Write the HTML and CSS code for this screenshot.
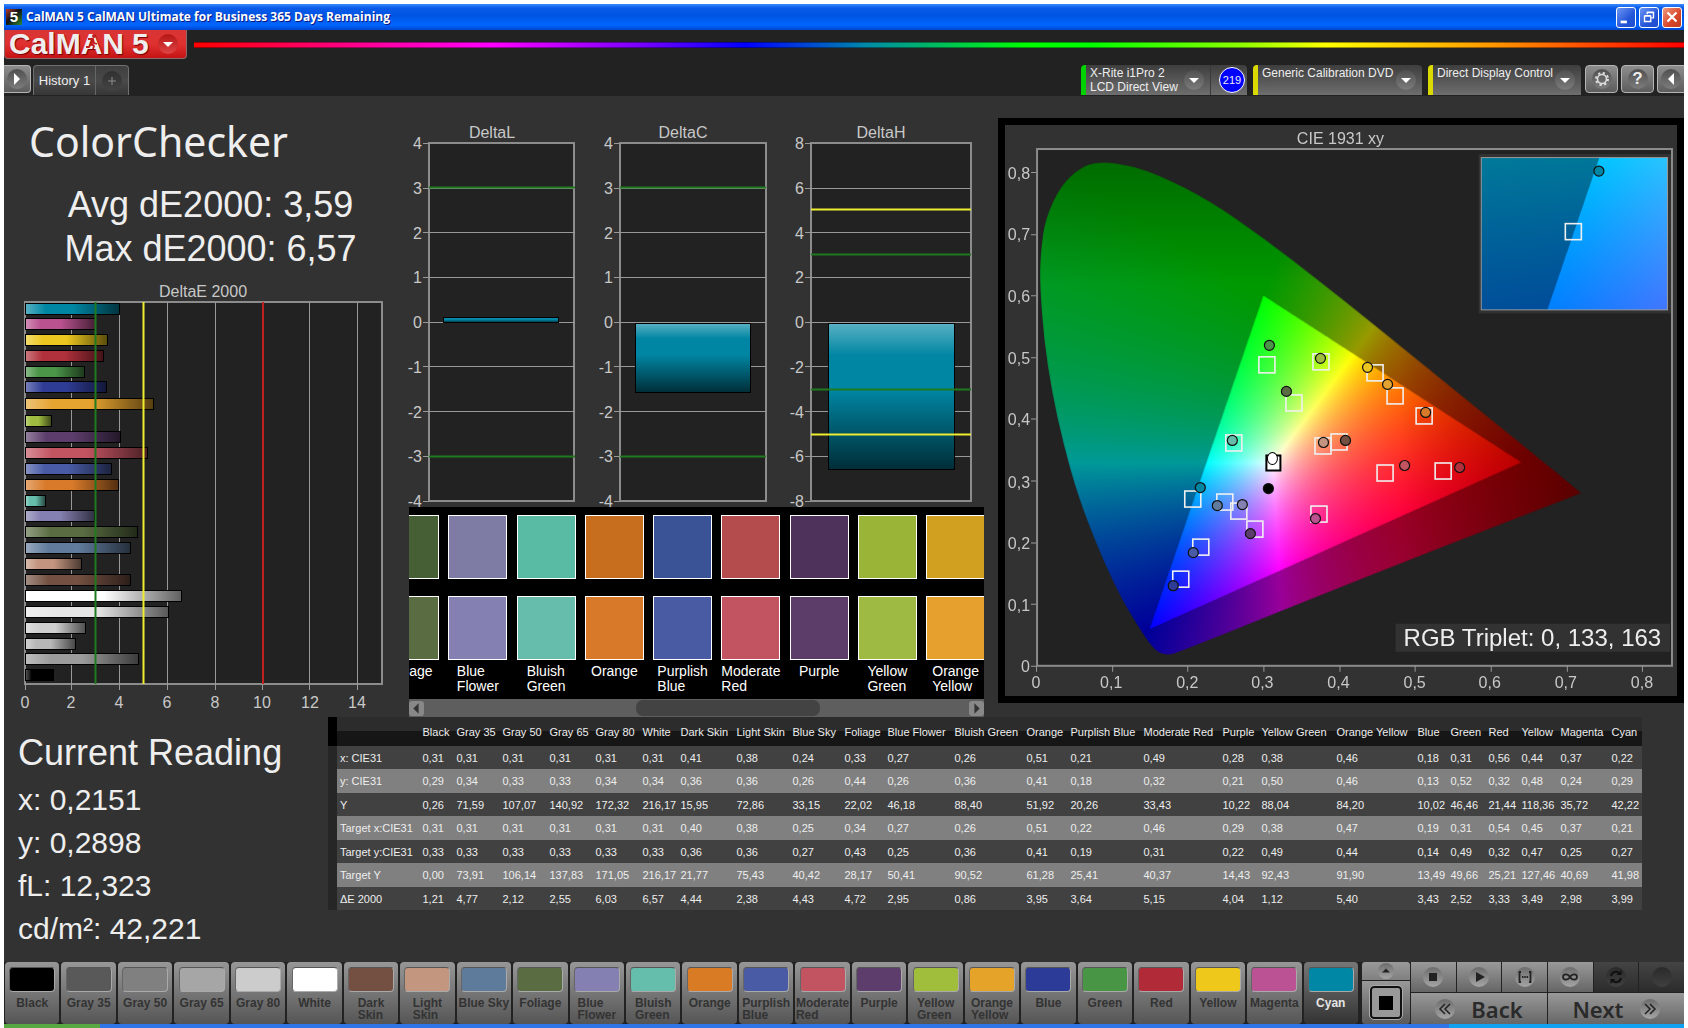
FILE: index.html
```html
<!DOCTYPE html>
<html lang="en">
<head>
<meta charset="utf-8">
<title>CalMAN 5</title>
<link rel="stylesheet" href="styles.css">
</head>
<body>
<header class="titlebar">
  <span class="app-icon">5</span>
  <span class="title-text">CalMAN 5 CalMAN Ultimate for Business 365 Days Remaining</span>
  <button class="win-btn" aria-label="Minimize"><svg viewBox="0 0 20 20"><path d="M4 14h7v3H4z" fill="#fff"/></svg></button>
  <button class="win-btn" aria-label="Restore"><svg viewBox="0 0 20 20"><path d="M8 7V5h7v6h-2M8 4.500h7M5 9h7v6H5zM5 8.500h7" fill="none" stroke="#fff" stroke-width="1.500"/></svg></button>
  <button class="win-btn close" aria-label="Close"><svg viewBox="0 0 20 20"><path d="M5 5l10 10M15 5L5 15" stroke="#fff" stroke-width="2.500"/></svg></button>
</header>

<div class="app">
  <div class="brand-row">
    <button class="logo"><span class="logo-name">CalMAN</span><span>5</span><span class="dot red"><svg viewBox="0 0 20 20"><path d="M5 8h10l-5 5z" fill="#fff"/></svg></span>
      <svg class="runner" viewBox="0 0 14 16"><circle cx="9" cy="2" r="2" fill="#c31c1c"/><path d="M3 5l5 0 1 4 3 1M8 5l-2 5 3 2-1 3M6 10l-2 3-3 0" fill="none" stroke="#c31c1c" stroke-width="1.800"/></svg>
    </button>
    <div class="spectrum"></div>
  </div>
  <nav class="tab-row">
    <button class="square first" aria-label="Expand"><span class="dot"><svg viewBox="0 0 20 20"><path d="M7 4l6 6-6 6z" fill="#fff"/></svg></span></button>
    <div class="tabs"><button class="tab">History 1</button><button class="tab add" aria-label="Add history"><span class="dot dim"><svg viewBox="0 0 20 20"><path d="M10 6v8M6 10h8" stroke="#8c8c8c"/></svg></span></button></div>
    <div class="devices">
      <div class="device meter"><button class="device-main">X-Rite i1Pro 2<br>LCD Direct View<span class="dot"><svg viewBox="0 0 20 20"><path d="M5 8h10l-5 5z" fill="#fff"/></svg></span></button><span class="badge">219</span></div>
      <div class="device source"><button class="device-main">Generic Calibration DVD<span class="dot"><svg viewBox="0 0 20 20"><path d="M5 8h10l-5 5z" fill="#fff"/></svg></span></button></div>
      <div class="device display"><button class="device-main">Direct Display Control<span class="dot"><svg viewBox="0 0 20 20"><path d="M5 8h10l-5 5z" fill="#fff"/></svg></span></button></div>
      <button class="square" aria-label="Settings"><span class="dot"><svg viewBox="0 0 20 20"><circle cx="10" cy="10" r="4.500" fill="none" stroke="#ddd" stroke-width="1.600"/><circle cx="10" cy="10" r="6" fill="none" stroke="#ddd" stroke-width="2" stroke-dasharray="2.300 2.412"/></svg></span></button>
      <button class="square" aria-label="Help"><span class="dot glyph">?</span></button>
      <button class="square last" aria-label="Collapse"><span class="dot"><svg viewBox="0 0 20 20"><path d="M13 4l-6 6 6 6z" fill="#fff"/></svg></span></button>
    </div>
  </nav>

  <main class="workspace">
    <section class="overview">
      <h1>ColorChecker</h1>
      <p class="stats">Avg dE2000: 3,59<br>Max dE2000: 6,57</p>
      <svg class="chart" viewBox="0 0 401 436">
        <defs>
          <linearGradient id="shadeX"><stop offset="0" stop-color="#fff" stop-opacity=".35"/><stop offset=".22" stop-color="#fff" stop-opacity="0"/><stop offset=".5" stop-color="#000" stop-opacity="0"/><stop offset="1" stop-color="#000" stop-opacity=".62"/></linearGradient>
          <linearGradient id="shadeY" x2="0" y2="1"><stop offset="0" stop-color="#fff" stop-opacity=".35"/><stop offset=".22" stop-color="#fff" stop-opacity="0"/><stop offset=".45" stop-color="#000" stop-opacity="0"/><stop offset="1" stop-color="#000" stop-opacity=".66"/></linearGradient>
        </defs>
        <text class="mid" x="199" y="17">DeltaE 2000</text>
        <rect class="plot" x="21" y="22" width="357" height="382"/>
        <path class="grid" d="M67.500 22V410M115.500 22V410M163.500 22V410M211.500 22V410M258.500 22V410M305.500 22V410M353.500 22V410M21.500 404V410"/>
        <g id="deltaBars"></g>
        <path class="ok strong" d="M91.500 22V404"/><path class="warn" d="M139.500 22V404"/><path class="bad" d="M259 22V404"/>
        <g class="mid"><text x="21" y="428">0</text><text x="67" y="428">2</text><text x="115" y="428">4</text><text x="163" y="428">6</text><text x="211" y="428">8</text><text x="258" y="428">10</text><text x="306" y="428">12</text><text x="353" y="428">14</text></g>
      </svg>
    </section>

    <section class="details">
      <div class="deltas">
        <svg class="chart" viewBox="0 0 192 397">
          <text class="mid" x="87" y="28">DeltaL</text>
          <rect class="plot" x="24" y="33" width="145" height="358"/>
          <path class="grid" d="M18 33.500h6M18 78.500h152M18 122.500h152M18 167.500h152M18 212.500h152M18 256.500h152M18 301.500h152M18 346.500h152M18 391.500h6"/>
          <path class="ok strong" d="M24 77.500h146M24 346.500h146"/>
          <g class="bar"><rect class="cyan" x="38.500" y="207.500" width="115" height="5"/><rect fill="url(#shadeY)" x="38.500" y="207.500" width="115" height="5"/></g>
          <g class="end"><text x="17" y="39">4</text><text x="17" y="84">3</text><text x="17" y="129">2</text><text x="17" y="173">1</text><text x="17" y="218">0</text><text x="17" y="263">-1</text><text x="17" y="308">-2</text><text x="17" y="352">-3</text><text x="17" y="397">-4</text></g>
        </svg>
        <svg class="chart" viewBox="0 0 191 397">
          <text class="mid" x="86" y="28">DeltaC</text>
          <rect class="plot" x="23" y="33" width="146" height="358"/>
          <path class="grid" d="M17 33.500h6M17 78.500h152M17 122.500h152M17 167.500h152M17 212.500h152M17 256.500h152M17 301.500h152M17 346.500h152M17 391.500h6"/>
          <path class="ok strong" d="M23 77.500h146M23 346.500h146"/>
          <g class="bar"><rect class="cyan" x="38.500" y="213.500" width="115" height="69"/><rect fill="url(#shadeY)" x="38.500" y="213.500" width="115" height="69"/></g>
          <g class="end"><text x="16" y="39">4</text><text x="16" y="84">3</text><text x="16" y="129">2</text><text x="16" y="173">1</text><text x="16" y="218">0</text><text x="16" y="263">-1</text><text x="16" y="308">-2</text><text x="16" y="352">-3</text><text x="16" y="397">-4</text></g>
        </svg>
        <svg class="chart" viewBox="0 0 202 397">
          <text class="mid" x="93" y="28">DeltaH</text>
          <rect class="plot" x="23" y="33" width="160" height="358"/>
          <path class="grid" d="M17 33.500h6M17 78.500h166M17 122.500h166M17 167.500h166M17 212.500h166M17 256.500h166M17 301.500h166M17 346.500h166M17 391.500h6"/>
          <g class="bar"><rect class="cyan" x="40.500" y="213.500" width="126" height="146"/><rect fill="url(#shadeY)" x="40.500" y="213.500" width="126" height="146"/></g>
          <path class="ok strong" d="M23 144.500h160M23 279.500h160"/><path class="warn" d="M23 99.500h160M23 324.500h160"/>
          <g class="end"><text x="16" y="39">8</text><text x="16" y="84">6</text><text x="16" y="129">4</text><text x="16" y="173">2</text><text x="16" y="218">0</text><text x="16" y="263">-2</text><text x="16" y="308">-4</text><text x="16" y="352">-6</text><text x="16" y="397">-8</text></g>
        </svg>
      </div>
      <div class="swatches">
        <div class="swatch-track">
          <div class="pair"><i style="background:#475f35"></i><i style="background:#5a6d42"></i><span>Foliage</span></div>
          <div class="pair"><i style="background:#7e7ca4"></i><i style="background:#8480b1"></i><span>Blue<br>Flower</span></div>
          <div class="pair"><i style="background:#5abba5"></i><i style="background:#66bdac"></i><span>Bluish<br>Green</span></div>
          <div class="pair"><i style="background:#c76e1e"></i><i style="background:#d87829"></i><span>Orange</span></div>
          <div class="pair"><i style="background:#3a5296"></i><i style="background:#495ba3"></i><span>Purplish<br>Blue</span></div>
          <div class="pair"><i style="background:#b44b4d"></i><i style="background:#c25360"></i><span>Moderate<br>Red</span></div>
          <div class="pair"><i style="background:#4e325c"></i><i style="background:#5c3d6a"></i><span>Purple</span></div>
          <div class="pair"><i style="background:#9ab438"></i><i style="background:#9fba42"></i><span>Yellow<br>Green</span></div>
          <div class="pair"><i style="background:#d1a021"></i><i style="background:#e5a02e"></i><span>Orange<br>Yellow</span></div>
        </div>
      </div>
      <div class="scrollbar"><button aria-label="Scroll left"><svg viewBox="0 0 14 14"><path d="M9 2v10L4 7z"/></svg></button><span class="thumb"></span><button aria-label="Scroll right"><svg viewBox="0 0 14 14"><path d="M5 2v10l5-5z"/></svg></button></div>
    </section>

    <section class="gamut">
      <canvas id="gamutCanvas" width="671" height="570"></canvas>
      <svg class="chart" viewBox="0 0 671 570">
        <text class="mid" x="335" y="19">CIE 1931 xy</text>
        <rect class="frame" x="32" y="24" width="634" height="516"/>
        <path class="grid" d="M26 540.500h6M26 478.500h5M26 417.500h5M26 355.500h5M26 293.500h5M26 232.500h5M26 170.500h5M26 109.500h5M26 47.500h5M31.500 540v6M107.500 540v6M182.500 540v6M258.500 540v6M334.500 540v6M409.500 540v6M485.500 540v6M561.500 540v6M636.500 540v6"/>
        <g class="end"><text x="25" y="546">0</text><text x="25" y="485">0,1</text><text x="25" y="423">0,2</text><text x="25" y="362">0,3</text><text x="25" y="300">0,4</text><text x="25" y="239">0,5</text><text x="25" y="177">0,6</text><text x="25" y="115">0,7</text><text x="25" y="54">0,8</text></g>
        <g class="mid"><text x="31" y="562">0</text><text x="106" y="562">0,1</text><text x="182" y="562">0,2</text><text x="257" y="562">0,3</text><text x="333" y="562">0,4</text><text x="409" y="562">0,5</text><text x="484" y="562">0,6</text><text x="560" y="562">0,7</text><text x="636" y="562">0,8</text></g>
        <g id="markers"></g>
        <rect x="390" y="498" width="274" height="28" fill="#323232"/>
        <text class="triplet" x="398" y="520">RGB Triplet: 0, 133, 163</text>
      </svg>
    </section>
  </main>

  <section class="results">
    <div class="reading">
      <h2>Current Reading</h2>
      <p>x: 0,2151<br>y: 0,2898<br>fL: 12,323<br>cd/m²: 42,221</p>
    </div>
    <table class="data">
      <colgroup><col style="width:87px"><col style="width:34px"><col style="width:46px"><col style="width:47px"><col style="width:46px"><col style="width:47px"><col style="width:38px"><col style="width:56px"><col style="width:56px"><col style="width:52px"><col style="width:43px"><col style="width:67px"><col style="width:72px"><col style="width:44px"><col style="width:73px"><col style="width:79px"><col style="width:39px"><col style="width:75px"><col style="width:81px"><col style="width:33px"><col style="width:38px"><col style="width:33px"><col style="width:39px"><col style="width:51px"><col style="width:33px"></colgroup>
      <thead><tr><td></td><th>Black</th><th>Gray 35</th><th>Gray 50</th><th>Gray 65</th><th>Gray 80</th><th>White</th><th>Dark Skin</th><th>Light Skin</th><th>Blue Sky</th><th>Foliage</th><th>Blue Flower</th><th>Bluish Green</th><th>Orange</th><th>Purplish Blue</th><th>Moderate Red</th><th>Purple</th><th>Yellow Green</th><th>Orange Yellow</th><th>Blue</th><th>Green</th><th>Red</th><th>Yellow</th><th>Magenta</th><th>Cyan</th></tr></thead>
      <tbody>
        <tr><th>x: CIE31</th><td>0,31</td><td>0,31</td><td>0,31</td><td>0,31</td><td>0,31</td><td>0,31</td><td>0,41</td><td>0,38</td><td>0,24</td><td>0,33</td><td>0,27</td><td>0,26</td><td>0,51</td><td>0,21</td><td>0,49</td><td>0,28</td><td>0,38</td><td>0,46</td><td>0,18</td><td>0,31</td><td>0,56</td><td>0,44</td><td>0,37</td><td>0,22</td></tr>
        <tr><th>y: CIE31</th><td>0,29</td><td>0,34</td><td>0,33</td><td>0,33</td><td>0,34</td><td>0,34</td><td>0,36</td><td>0,36</td><td>0,26</td><td>0,44</td><td>0,26</td><td>0,36</td><td>0,41</td><td>0,18</td><td>0,32</td><td>0,21</td><td>0,50</td><td>0,46</td><td>0,13</td><td>0,52</td><td>0,32</td><td>0,48</td><td>0,24</td><td>0,29</td></tr>
        <tr><th>Y</th><td>0,26</td><td>71,59</td><td>107,07</td><td>140,92</td><td>172,32</td><td>216,17</td><td>15,95</td><td>72,86</td><td>33,15</td><td>22,02</td><td>46,18</td><td>88,40</td><td>51,92</td><td>20,26</td><td>33,43</td><td>10,22</td><td>88,04</td><td>84,20</td><td>10,02</td><td>46,46</td><td>21,44</td><td>118,36</td><td>35,72</td><td>42,22</td></tr>
        <tr><th>Target x:CIE31</th><td>0,31</td><td>0,31</td><td>0,31</td><td>0,31</td><td>0,31</td><td>0,31</td><td>0,40</td><td>0,38</td><td>0,25</td><td>0,34</td><td>0,27</td><td>0,26</td><td>0,51</td><td>0,22</td><td>0,46</td><td>0,29</td><td>0,38</td><td>0,47</td><td>0,19</td><td>0,31</td><td>0,54</td><td>0,45</td><td>0,37</td><td>0,21</td></tr>
        <tr><th>Target y:CIE31</th><td>0,33</td><td>0,33</td><td>0,33</td><td>0,33</td><td>0,33</td><td>0,33</td><td>0,36</td><td>0,36</td><td>0,27</td><td>0,43</td><td>0,25</td><td>0,36</td><td>0,41</td><td>0,19</td><td>0,31</td><td>0,22</td><td>0,49</td><td>0,44</td><td>0,14</td><td>0,49</td><td>0,32</td><td>0,47</td><td>0,25</td><td>0,27</td></tr>
        <tr><th>Target Y</th><td>0,00</td><td>73,91</td><td>106,14</td><td>137,83</td><td>171,05</td><td>216,17</td><td>21,77</td><td>75,43</td><td>40,42</td><td>28,17</td><td>50,41</td><td>90,52</td><td>61,28</td><td>25,41</td><td>40,37</td><td>14,43</td><td>92,43</td><td>91,90</td><td>13,49</td><td>49,66</td><td>25,21</td><td>127,46</td><td>40,69</td><td>41,98</td></tr>
        <tr><th>ΔE 2000</th><td>1,21</td><td>4,77</td><td>2,12</td><td>2,55</td><td>6,03</td><td>6,57</td><td>4,44</td><td>2,38</td><td>4,43</td><td>4,72</td><td>2,95</td><td>0,86</td><td>3,95</td><td>3,64</td><td>5,15</td><td>4,04</td><td>1,12</td><td>5,40</td><td>3,43</td><td>2,52</td><td>3,33</td><td>3,49</td><td>2,98</td><td>3,99</td></tr>
      </tbody>
    </table>
  </section>

  <footer class="toolbar">
    <div class="patches">
      <button><i style="background:#000"></i><span>Black</span></button>
      <button><i style="background:#595959"></i><span>Gray 35</span></button>
      <button><i style="background:#808080"></i><span>Gray 50</span></button>
      <button><i style="background:#a6a6a6"></i><span>Gray 65</span></button>
      <button><i style="background:#ccc"></i><span>Gray 80</span></button>
      <button><i style="background:#fff"></i><span>White</span></button>
      <button><i style="background:#735042"></i><span>Dark<br>Skin</span></button>
      <button><i style="background:#c39680"></i><span>Light<br>Skin</span></button>
      <button><i style="background:#5e7b9c"></i><span>Blue Sky</span></button>
      <button><i style="background:#596c42"></i><span>Foliage</span></button>
      <button><i style="background:#8480b1"></i><span>Blue<br>Flower</span></button>
      <button><i style="background:#65bdac"></i><span>Bluish<br>Green</span></button>
      <button><i style="background:#d97a25"></i><span>Orange</span></button>
      <button><i style="background:#4a5ba6"></i><span>Purplish<br>Blue</span></button>
      <button><i style="background:#c25462"></i><span>Moderate<br>Red</span></button>
      <button><i style="background:#5c3d6c"></i><span>Purple</span></button>
      <button><i style="background:#a0bd3c"></i><span>Yellow<br>Green</span></button>
      <button><i style="background:#e6a329"></i><span>Orange<br>Yellow</span></button>
      <button><i style="background:#2c3a98"></i><span>Blue</span></button>
      <button><i style="background:#479545"></i><span>Green</span></button>
      <button><i style="background:#b02a37"></i><span>Red</span></button>
      <button><i style="background:#eec91b"></i><span>Yellow</span></button>
      <button><i style="background:#bb5294"></i><span>Magenta</span></button>
      <button class="active"><i style="background:#0087a6"></i><span>Cyan</span></button>
    </div>
    <div class="pattern">
      <button aria-label="Show patterns"><span class="dot"><svg viewBox="0 0 20 20"><path d="M5 12l5-5 5 5z" fill="#222"/></svg></span></button>
      <button class="window-pattern" aria-label="Window pattern"><span></span></button>
    </div>
    <div class="controls">
      <button aria-label="Stop"><span class="dot"><svg viewBox="0 0 20 20"><path d="M6 6h8v8H6z" fill="#222"/></svg></span></button>
      <button aria-label="Play"><span class="dot"><svg viewBox="0 0 20 20"><path d="M7 5l9 5-9 5z" fill="#222"/></svg></span></button>
      <button aria-label="Series"><span class="dot"><svg viewBox="0 0 20 20"><path d="M6 5H4.500v10H6M14 5h1.500v10H14M7 10h1.500M9.300 10h1.500M11.600 10h1.500" fill="none" stroke="#222" stroke-width="1.800"/></svg></span></button>
      <button aria-label="Continuous"><span class="dot"><svg viewBox="0 0 20 20"><path d="M10 10c-2-3.500-7-3.500-7 0s5 3.500 7 0 7-3.500 7 0-5 3.500-7 0z" fill="none" stroke="#222" stroke-width="1.700"/></svg></span></button>
      <button class="off" aria-label="Refresh"><span class="dot"><svg viewBox="0 0 20 20"><path d="M5 9a5 5 0 0 1 9-2M15 11a5 5 0 0 1-9 2" fill="none" stroke="#111" stroke-width="2"/><path d="M15.500 3v5h-5zM4.500 17v-5h5z" fill="#111"/></svg></span></button>
      <button class="off" aria-label="Record"><span class="dot"></span></button>
      <button class="nav"><span class="dot"><svg viewBox="0 0 20 20"><path d="M10 5l-5 5 5 5M15 5l-5 5 5 5" fill="none" stroke="#222" stroke-width="1.500"/></svg></span>Back</button>
      <button class="nav">Next<span class="dot"><svg viewBox="0 0 20 20"><path d="M5 5l5 5-5 5M10 5l5 5-5 5" fill="none" stroke="#222" stroke-width="1.500"/></svg></span></button>
    </div>
  </footer>
</div>
<div class="taskbar"></div>
<script src="app.js"></script>
</body>
</html>
```
FILE: styles.css
```css
* { box-sizing: border-box; }
body { margin: 0; padding: 4px 4px 0; min-height: 100vh; display: flex; flex-direction: column; background: #fff; font-family: "Liberation Sans", Arial, sans-serif; color: #eee; }
button { margin: 0; padding: 0; border: 0; font: inherit; color: inherit; background: none; cursor: pointer; }
svg { display: block; }
h1, h2, p { margin: 0; font-weight: 400; }

.titlebar { height: 26px; display: flex; align-items: center; gap: 3px; padding: 0 2px; background: linear-gradient(#3a8bff, #0a5be8 15%, #0054e3 45%, #0066ff 80%, #0045d0); }
.app-icon { width: 16px; height: 16px; margin-right: 1px; background: linear-gradient(135deg, #b43b2c, #111 45%, #2c8a35); font: bold 15px/16px "Liberation Sans", sans-serif; text-align: center; color: #fff; }
.title-text { flex: 1; font: bold 12px/20px "Open Sans", "Noto Sans", sans-serif; color: #fff; text-shadow: 1px 1px #0a1883; }
.win-btn { width: 20px; height: 21px; border: 1px solid #fff; border-radius: 3px; background: linear-gradient(135deg, #6d97f5, #2455d8 60%, #1e4ccc); }
.win-btn.close { background: linear-gradient(135deg, #f0997d, #d8452a 60%, #c03d20); }

.app { flex: 1; display: flex; flex-direction: column; background: #222; }
.brand-row { height: 35px; display: flex; gap: 7px; }
.logo { position: relative; width: 183px; height: 29px; flex: none; display: flex; align-items: center; gap: 8px; padding: 0 4px; border: 1px solid #8a6a6a; border-top: 0; border-radius: 0 0 4px 4px; background: linear-gradient(#d83535, #e03030 50%, #c41414); font: bold 30px/26px "Liberation Sans", sans-serif; color: #eee; text-shadow: 1px 1px 1px #700; overflow: hidden; }
.runner { position: absolute; left: 80px; top: 4px; width: 14px; height: 16px; }
.dot { width: 20px; height: 20px; border-radius: 50%; background: linear-gradient(#5a5a5a, #8e8e8e); display: inline-block; flex: none; }
.dot.red { background: linear-gradient(#b51616, #e04444); margin-left: 1px; text-shadow: none; }
.dot.dim { background: linear-gradient(#303030, #444); }
.spectrum { flex: 1; height: 6px; margin-top: 12px; background: linear-gradient(90deg, #f00, #f0a 13%, #f0f 20%, #70f 30%, #00f 37%, #08a 45%, #0f0 56%, #0f0 60%, #8f0 70%, #ff0 76%, #f90 87%, #f00); border-top: 1px solid #0006; border-bottom: 1px solid #0006; }
.tab-row { height: 31px; display: flex; gap: 2px; }
.square { width: 33px; height: 28px; border: 1px solid #b5b5b5; border-radius: 4px; background: linear-gradient(#8d8d8d, #5d5d5d); display: grid; place-items: center; }
.square.first { width: 27px; border-left: 0; border-radius: 0 4px 4px 0; }
.square.last { width: 27px; border-right: 0; border-radius: 4px 0 0 4px; }
.glyph { font: bold 17px/20px "Liberation Sans", sans-serif; text-align: center; }
.tabs { display: flex; height: 30px; border: 1px solid #707070; border-bottom: 0; border-radius: 4px 4px 0 0; background: linear-gradient(#3f3f3f, #4a4a4a 50%, #373737); font-size: 13px; }
.tab { width: 61px; }
.add { width: 33px; border-left: 1px solid #666; display: grid; place-items: center; }
.devices { margin-left: auto; display: flex; gap: 3px; }
.device { height: 30px; margin-right: 3px; display: flex; border-left: 5px solid #dada00; border-radius: 4px 4px 0 0; background: linear-gradient(#3e3e3e, #6e6e6e); font-size: 12px; line-height: 14px; }
.meter { border-left-color: #00d400; width: 166px; }
.source { width: 169px; }
.display { width: 153px; margin-right: 1px; }
.device-main { flex: 1; position: relative; text-align: left; padding: 1px 0 0 4px; white-space: nowrap; display: flex; flex-direction: column; justify-content: flex-start; }
.device-main .dot { position: absolute; right: 6px; top: 5px; }
.device-main .dot, .square .dot { background: linear-gradient(#505050, #7c7c7c); }
.badge { width: 26px; height: 26px; margin: 2px 2px 0 8px; border-radius: 50%; border: 1px solid #fff; background: #00f; font-size: 11px; line-height: 24px; text-align: center; }
.meter .device-main { border-right: 1px solid #3a3a3a; }

.workspace { display: grid; grid-template-columns: minmax(0, 401fr) minmax(0, 593fr) minmax(0, 686fr); background: #323232; }
.overview { padding-top: 15px; }
.overview h1 { font: 41px/60px "Noto Sans", sans-serif; padding-left: 25px; }
.stats { margin: 12px 0 9px; font-size: 36px; line-height: 44px; text-align: center; padding-left: 12px; }
.chart { width: 100%; height: auto; font-size: 16px; fill: #c8c8c8; }
.mid { text-anchor: middle; }
.end { text-anchor: end; }
.plot { fill: #222; stroke: #8c8c8c; stroke-width: 2; }
.frame { fill: none; stroke: #8c8c8c; stroke-width: 2; }
.grid { stroke: #999; stroke-width: 1; fill: none; }
.ok { stroke: #1a7a1a; }
.warn { stroke: #eeee30; stroke-width: 2; }
.bad { stroke: #c02020; stroke-width: 2; }
.strong { stroke-width: 2; stroke: #1f7a1f; }
.bar { stroke: #000; }
.cyan { fill: #0086a3; }
.details { padding-top: 14px; }
.deltas { display: grid; grid-template-columns: 192fr 191fr 202fr; padding-right: 8px; }
.swatches { margin: 0 14px 0 4px; height: 192px; background: #000; overflow: hidden; }
.swatch-track { display: grid; grid-template-columns: repeat(9, 1fr); width: 107%; margin-left: -6%; padding: 8px 0 0 1px; }
.pair { display: flex; flex-direction: column; align-items: center; gap: 17px; font-size: 14px; line-height: 15px; color: #fff; }
.pair i { width: 59px; height: 64px; border: 1px solid #fff; }
.pair span { margin-top: -13px; }
.scrollbar { margin: 0 14px 0 4px; height: 18px; display: flex; align-items: center; background: #5e5e5e; }
.scrollbar button { width: 15px; height: 15px; border-radius: 3px; background: #888; fill: #333; }
.thumb { width: 32%; height: 16px; margin: 0 26% 0 auto; border-radius: 7px; background: #434343; }
.gamut { margin: 22px 0 0; border: 7px solid #000; display: grid; height: max-content; }
.gamut > * { grid-area: 1 / 1; width: 100%; height: auto; }
.triplet { font-size: 24px; fill: #eee; }

.results { flex: 1; background: #323232; display: flex; align-items: flex-start; }
.reading { width: 324px; flex: none; padding: 14px 0 0 14px; }
.reading h2 { font-size: 36px; line-height: 44px; }
.reading p { font-size: 30px; line-height: 43px; padding-top: 3px; }
.data { flex: 1 1 0; width: 0; margin-right: 47px; table-layout: fixed; border-collapse: collapse; font-size: 11px; line-height: 16px; white-space: nowrap; }
.data th, .data td { padding: 0 0 0 3px; text-align: left; font-weight: 400; }
.data thead { height: 29px; background: linear-gradient(#2c2c2c 50%, #161616 50%); }
.data tbody tr { height: 23px; background: #414141; }
.data tbody tr:nth-child(even) { background: #808080; height: 24px; }
.data tbody th { border-left: 9px solid #262626; }
.data thead td { border-left: 9px solid #000; }

.toolbar { height: 62px; display: flex; gap: 1px; background: #222; color: #333; }
.patches { flex: 1; padding: 0 3px 0 1px; display: grid; grid-template-columns: repeat(24, minmax(0, 1fr)); column-gap: 2px; }
.patches button { display: flex; flex-direction: column; align-items: center; padding: 5px 0 0; border-radius: 4px; background: linear-gradient(#979797, #555); font-weight: bold; font-size: 12px; line-height: 12px; text-align: left; white-space: nowrap; }
.patches i { width: 46px; height: 25px; margin-bottom: 5px; border: 1px solid #aaa; border-top-color: #555; border-left-color: #666; border-radius: 4px; flex: none; }
.patches .active { background: linear-gradient(#777, #333); color: #e5e5e5; }
.pattern { width: 48px; display: grid; grid-template-rows: 18px 1fr; gap: 1px; }
.pattern button { display: grid; place-items: center; background: linear-gradient(#999, #808080); border-radius: 3px 3px 0 0; }
.pattern .dot { width: 16px; height: 16px; }
.pattern .window-pattern { background: linear-gradient(#999, #595959); border-radius: 0 0 3px 3px; }
.window-pattern span { width: 32px; height: 33px; border: 2px solid #111; outline: 1px solid #aaa; border-radius: 4px; background: linear-gradient(#000, #000) center / 14px 14px no-repeat, #999; }
.controls { width: 273px; display: grid; grid-template-columns: repeat(6, 1fr); grid-template-rows: 30px 31px; gap: 1px; }
.controls button { display: flex; align-items: center; justify-content: center; background: linear-gradient(#999, #666); }
.controls .dot, .pattern .dot { background: linear-gradient(#6c6c6c, #a5a5a5); }
.controls .off { background: linear-gradient(#444, #2c2c2c); }
.controls .off .dot { background: linear-gradient(#2a2a2a, #404040); }
.controls .nav { grid-column: span 3; gap: 16px; font: 600 22px/28px "Noto Sans", sans-serif; color: #2a2a2a; }
.taskbar { height: 4px; background: linear-gradient(90deg, #57a843 96px, #2f75e8 96px, #2f75e8 86%, #12a0f0 86%); }
```
FILE: app.js
```js
const NS = 'http://www.w3.org/2000/svg';
function add(parent, name, attrs) {
  const el = document.createElementNS(NS, name);
  for (const key in attrs) el.setAttribute(key, attrs[key]);
  parent.appendChild(el);
}

// DeltaE 2000 per patch: colour, value, top of the bar
const bars = [
  ['#0086a3', 3.99, 23], ['#b9528f', 2.98, 38], ['#ecc71f', 3.49, 54], ['#b0303b', 3.33, 70],
  ['#4b9549', 2.52, 86], ['#2f3c95', 3.43, 101], ['#e5a32f', 5.40, 118], ['#9fbc40', 1.12, 135],
  ['#5c3d6b', 4.04, 151], ['#c25361', 5.15, 167], ['#495ba5', 3.64, 183], ['#d87a2a', 3.95, 199],
  ['#66bdac', 0.86, 215], ['#8480b1', 2.95, 230], ['#5a6d42', 4.72, 246], ['#607b9c', 4.43, 262],
  ['#c39580', 2.38, 278], ['#735041', 4.44, 294], ['#ffffff', 6.57, 310], ['#e6e6e6', 6.03, 326],
  ['#cfcfcf', 2.55, 342], ['#b8b8b8', 2.12, 358], ['#9c9c9c', 4.77, 373], ['#000000', 1.21, 389]
];
const barGroup = document.getElementById('deltaBars');
for (const [fill, value, top] of bars) {
  const box = { x: 21.5, y: top + 0.5, width: Math.round(value * 23.85) - 1, height: 11, stroke: '#000' };
  add(barGroup, 'rect', { ...box, fill });
  add(barGroup, 'rect', { ...box, fill: 'url(#shadeX)' });
}

// Targets are squares, measurements are circles
const targets = [[262,239],[316,236],[370,247],[390,270],[419,290],[289,277],[229,317],[318,320],[334,316],[380,347],[438,345],[188,373],[220,376],[234,385],[250,403],[196,421],[176,453],[314,388],[568,106]];
const readings = [[264,220,'#4b9549'],[315,233,'#9fbc40'],[362,242,'#ecc71f'],[382,259,'#e5a32f'],[420,287,'#d87a2a'],[281,266,'#5a6d42'],[227,315,'#66bdac'],[318,317,'#c39580'],[340,315,'#735041'],[399,340,'#c25361'],[454,342,'#b0303b'],[263,363,'#000'],[195,362,'#0086a3'],[212,380,'#607b9c'],[237,379,'#8480b1'],[245,408,'#5c3d6b'],[188,427,'#495ba5'],[168,460,'#2f3c95'],[310,393,'#b9528f'],[593,46,'#0086a3']];
const markers = document.getElementById('markers');
for (const [x, y] of targets) add(markers, 'rect', { x: x - 8.5, y: y - 7.5, width: 16, height: 16, fill: 'none', stroke: '#f0f0f0', 'stroke-width': 1.6 });
add(markers, 'rect', { x: 261, y: 330, width: 14, height: 15, fill: '#fff', stroke: '#000', 'stroke-width': 2 });
for (const [x, y, fill] of readings) add(markers, 'circle', { cx: x, cy: y, r: 5, fill, stroke: '#111', 'stroke-width': 1.2 });
add(markers, 'ellipse', { cx: 267, cy: 333, rx: 5, ry: 6, fill: '#fff', stroke: '#000' });

// Chromaticity to display colour, dimmed outside the Rec. 709 triangle
function colour(x, y) {
  y = Math.max(y, 0.004);
  const X = x / y, Z = (1 - x - y) / y;
  const r = 3.2406 * X - 1.5372 - 0.4986 * Z;
  const g = -0.9689 * X + 1.8758 + 0.0415 * Z;
  const b = 0.0557 * X - 0.2040 + 1.0570 * Z;
  const inside = r >= 0 && g >= 0 && b >= 0;
  let k = 255 / Math.max(r, g, b) * (inside ? 1 : 0.6);
  if (x > 0.48) k *= 1 - (x - 0.48) * 1.75;
  if (y > 0.62) k *= 1 - (y - 0.62) * 1.5;
  return [r, g, b].map(v => Math.max(0, v) * k);
}
const canvas = document.getElementById('gamutCanvas');
const ctx = canvas.getContext('2d');
ctx.fillStyle = '#323232';
ctx.fillRect(0, 0, 671, 570);
ctx.fillStyle = '#222';
ctx.fillRect(31, 23, 636, 517);
function field(w, h, toXY) {
  const tile = document.createElement('canvas');
  tile.width = w; tile.height = h;
  const tctx = tile.getContext('2d');
  const img = tctx.createImageData(w, h);
  for (let j = 0; j < h; j++) for (let i = 0; i < w; i++) {
    const sum = [0, 0, 0];
    for (const [u, v] of [[0.25, 0.25], [0.75, 0.25], [0.25, 0.75], [0.75, 0.75]]) {
      colour(...toXY(i + u, j + v)).forEach((c, n) => { sum[n] += c / 4; });
    }
    img.data.set([...sum, 255], (j * w + i) * 4);
  }
  tctx.putImageData(img, 0, 0);
  return tile;
}
const locus = [[.172,.0167],[.1565,.0254],[.139,.056],[.115,.104],[.086,.178],[.056,.273],[.036,.36],[.021,.444],[.0106,.5276],[.005,.62],[.006,.67],[.0124,.726],[.033,.779],[.0594,.8085],[.085,.818],[.127,.810],[.165,.794],[.2296,.7535],[.3016,.6923],[.3731,.6245],[.4441,.5547],[.5125,.4866],[.5752,.4242],[.627,.3725],[.6915,.3083],[.719,.28],[.719,.28],[.46,.157],[.192,.024]]
  .map(([x, y]) => [31 + 756.8 * x, 540 - 616 * y]);
ctx.save();
ctx.beginPath();
locus.forEach((p, i) => {
  const q = locus[(i + 1) % locus.length];
  const m = [(p[0] + q[0]) / 2, (p[1] + q[1]) / 2];
  if (i) ctx.quadraticCurveTo(...p, ...m); else ctx.moveTo(...m);
});
ctx.quadraticCurveTo(...locus[0], (locus[0][0] + locus[1][0]) / 2, (locus[0][1] + locus[1][1]) / 2);
ctx.clip();
ctx.drawImage(field(636, 517, (i, j) => [i / 756.8, (517 - j) / 616]), 31, 23);
ctx.restore();

// Magnified view around the selected patch
ctx.fillStyle = '#323232';
ctx.fillRect(473, 29, 192, 159);
ctx.fillStyle = '#999';
ctx.fillRect(475, 32, 187, 153);
ctx.drawImage(field(185, 151, (i, j) => [0.2076 + (i - 92) / 3330, 0.2677 - (j - 73) / 2710]), 476, 33);
```
